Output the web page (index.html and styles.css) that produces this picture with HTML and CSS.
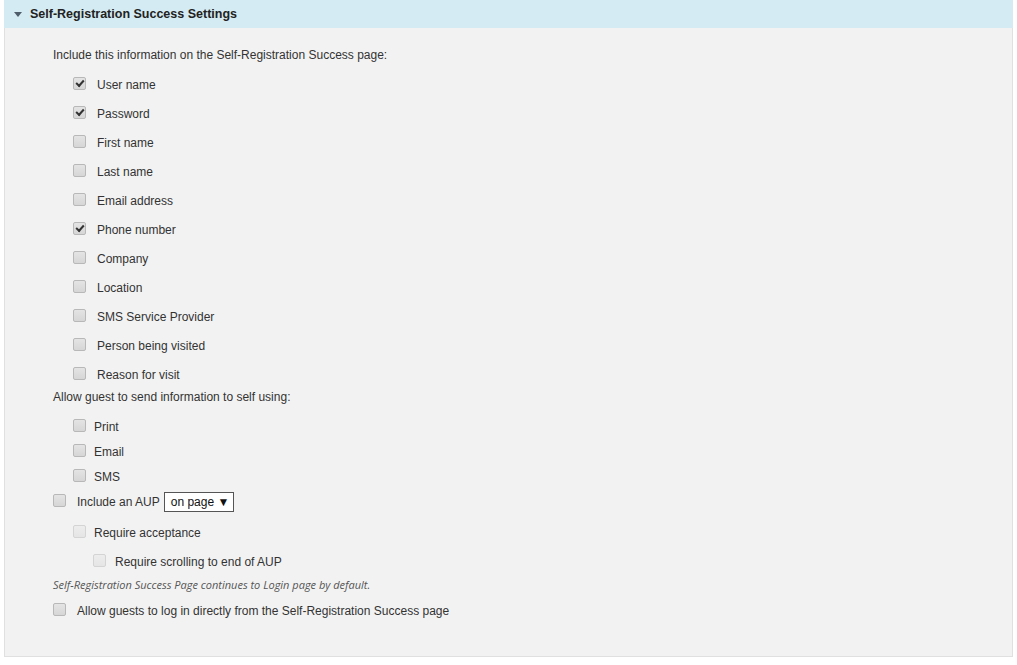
FILE: index.html
```html
<!DOCTYPE html>
<html lang="en">
<head>
  <meta charset="UTF-8">
  <title>Self-Registration Success Settings</title>
  <link rel="stylesheet" href="styles.css">
</head>
<body>
  <div class="panel">
    <div class="panel-header">
      <svg class="caret" width="8" height="5" viewBox="0 0 8 5"><path d="M0 0h8L4 5z" fill="#4f5d6b"/></svg>
      <span class="panel-title">Self-Registration Success Settings</span>
    </div>
    <div class="panel-body">
      <p class="intro">Include this information on the Self-Registration Success page:</p>
      <ul class="fields">
        <li><input type="checkbox" checked> User name</li>
        <li><input type="checkbox" checked> Password</li>
        <li><input type="checkbox"> First name</li>
        <li><input type="checkbox"> Last name</li>
        <li><input type="checkbox"> Email address</li>
        <li><input type="checkbox" checked> Phone number</li>
        <li><input type="checkbox"> Company</li>
        <li><input type="checkbox"> Location</li>
        <li><input type="checkbox"> SMS Service Provider</li>
        <li><input type="checkbox"> Person being visited</li>
        <li><input type="checkbox"> Reason for visit</li>
      </ul>
      <p class="intro send">Allow guest to send information to self using:</p>
      <ul class="send-list">
        <li><input type="checkbox"> Print</li>
        <li><input type="checkbox"> Email</li>
        <li><input type="checkbox"> SMS</li>
      </ul>
      <div class="row aup">
        <input type="checkbox"> Include an AUP
        <span class="select">on page &#9660;</span>
      </div>
      <div class="row accept"><input type="checkbox" disabled> Require acceptance</div>
      <div class="row scroll"><input type="checkbox" disabled> Require scrolling to end of AUP</div>
      <p class="note">Self-Registration Success Page continues to Login page by default.</p>
      <div class="row login"><input type="checkbox"> Allow guests to log in directly from the Self-Registration Success page</div>
    </div>
  </div>
</body>
</html>
```

FILE: styles.css
```css
body { margin: 0; background: #fff; font-family: "Liberation Sans", Arial, sans-serif; font-size: 12px; color: #333; }

input[type="checkbox"] {
  appearance: none; -webkit-appearance: none; margin: 0 0 3px 0;
  width: 13px; height: 13px; border: 1px solid #b8b8b8; border-radius: 2px;
  background: linear-gradient(#e4e4e4, #d6d6d6); box-sizing: border-box;
  display: inline-flex; align-items: center; justify-content: center; flex: none;
}
input[type="checkbox"]:checked::after {
  content: ""; width: 6px; height: 3px; border-left: 2px solid #333; border-bottom: 2px solid #333;
  transform: rotate(-48deg); margin-top: -2px;
}
input[type="checkbox"]:disabled { border-color: #d4d4d4; background: linear-gradient(#ededed, #e5e5e5); }

.panel { margin: 0 4px; height: 657px; box-sizing: border-box; border: 1px solid #e0e0e0; border-top: 0; background: #f2f2f2; }
.panel-header { height: 28px; background: #d5ebf3; display: flex; align-items: center; padding-left: 10px; margin: 0 -1px; }
.caret { margin-right: 8px; margin-top: 1px; }
.panel-title { font-weight: bold; font-size: 12.5px; color: #222; }
.panel-body { padding: 19px 0 0 48px; }
.intro { margin: 0; line-height: 16px; }
ul { list-style: none; margin: 0; padding: 0; }
li, .row { display: flex; align-items: center; }
.fields { margin-top: 7px; }
.fields li { height: 29px; padding-left: 20px; }
.fields input { margin-right: 11px; }
.send-list { margin-top: 9px; }
.send-list li { height: 25px; padding-left: 20px; }
.send-list input { margin-right: 8px; }
.aup { height: 26px; }
.aup input, .login input { margin-right: 11px; }
.select { margin-left: 4px; border: 1px solid #555; background: #fff; padding: 2px 4px 2px 6px; line-height: 14px; font-size: 12px; color: #111; }
.accept { height: 36px; padding-left: 20px; }
.accept input { margin-right: 8px; }
.scroll { height: 22px; padding-left: 40px; }
.scroll input { margin-right: 9px; }
.note { margin: 0; height: 23px; line-height: 23px; font-family: "Open Sans", sans-serif; font-style: italic; font-size: 11px; color: #555; }
.login { height: 30px; }
```
